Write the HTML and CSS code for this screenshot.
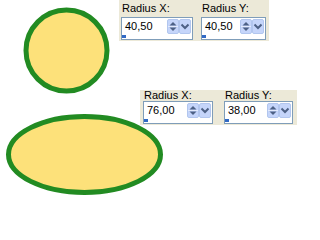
FILE: index.html
```html
<!DOCTYPE html>
<html>
<head>
<meta charset="utf-8">
<link rel="stylesheet" href="styles.css">
</head>
<body>
<div class="canvas">
  <svg class="drawing" width="302" height="208" viewBox="0 0 302 208">
    <circle cx="66.5" cy="50.5" r="40.5" fill="#FDE17A" stroke="#228B22" stroke-width="5"/>
    <ellipse cx="84.5" cy="154.5" rx="76" ry="38" fill="#FDE17A" stroke="#228B22" stroke-width="5"/>
  </svg>

  <div class="props props-circle">
    <div class="field w-x1">
      <div class="field-label">Radius X:</div>
      <div class="spin-edit">
        <div class="spin-row">
          <span class="spin-value">40,50</span>
          <svg class="spin-buttons" width="24" height="15" viewBox="0 0 24 15">
            <rect x="0.5" y="0.5" width="11" height="14" rx="1.5" fill="#C5D5FA" stroke="#B2C6EE"/>
            <line x1="1" y1="7.5" x2="11" y2="7.5" stroke="#E3EBFD"/>
            <polygon points="2.5,6.5 6,3 9.5,6.5" fill="#4D6185"/>
            <polygon points="2.5,8.5 9.5,8.5 6,12" fill="#4D6185"/>
            <rect x="12.5" y="0.5" width="11" height="14" rx="1.5" fill="#C5D5FA" stroke="#B2C6EE"/>
            <polyline points="14.5,5.5 18,9 21.5,5.5" fill="none" stroke="#4D6185" stroke-width="2"/>
          </svg>
        </div>
        <div class="spin-track"><span class="spin-mark"></span></div>
      </div>
    </div>
    <div class="field w-y1">
      <div class="field-label">Radius Y:</div>
      <div class="spin-edit">
        <div class="spin-row">
          <span class="spin-value">40,50</span>
          <svg class="spin-buttons" width="24" height="15" viewBox="0 0 24 15">
            <rect x="0.5" y="0.5" width="11" height="14" rx="1.5" fill="#C5D5FA" stroke="#B2C6EE"/>
            <line x1="1" y1="7.5" x2="11" y2="7.5" stroke="#E3EBFD"/>
            <polygon points="2.5,6.5 6,3 9.5,6.5" fill="#4D6185"/>
            <polygon points="2.5,8.5 9.5,8.5 6,12" fill="#4D6185"/>
            <rect x="12.5" y="0.5" width="11" height="14" rx="1.5" fill="#C5D5FA" stroke="#B2C6EE"/>
            <polyline points="14.5,5.5 18,9 21.5,5.5" fill="none" stroke="#4D6185" stroke-width="2"/>
          </svg>
        </div>
        <div class="spin-track"><span class="spin-mark"></span></div>
      </div>
    </div>
  </div>

  <div class="props props-ellipse">
    <div class="field w-x2">
      <div class="field-label">Radius X:</div>
      <div class="spin-edit">
        <div class="spin-row">
          <span class="spin-value">76,00</span>
          <svg class="spin-buttons" width="24" height="15" viewBox="0 0 24 15">
            <rect x="0.5" y="0.5" width="11" height="14" rx="1.5" fill="#C5D5FA" stroke="#B2C6EE"/>
            <line x1="1" y1="7.5" x2="11" y2="7.5" stroke="#E3EBFD"/>
            <polygon points="2.5,6.5 6,3 9.5,6.5" fill="#4D6185"/>
            <polygon points="2.5,8.5 9.5,8.5 6,12" fill="#4D6185"/>
            <rect x="12.5" y="0.5" width="11" height="14" rx="1.5" fill="#C5D5FA" stroke="#B2C6EE"/>
            <polyline points="14.5,5.5 18,9 21.5,5.5" fill="none" stroke="#4D6185" stroke-width="2"/>
          </svg>
        </div>
        <div class="spin-track"><span class="spin-mark"></span></div>
      </div>
    </div>
    <div class="field w-y2">
      <div class="field-label">Radius Y:</div>
      <div class="spin-edit">
        <div class="spin-row">
          <span class="spin-value">38,00</span>
          <svg class="spin-buttons" width="24" height="15" viewBox="0 0 24 15">
            <rect x="0.5" y="0.5" width="11" height="14" rx="1.5" fill="#C5D5FA" stroke="#B2C6EE"/>
            <line x1="1" y1="7.5" x2="11" y2="7.5" stroke="#E3EBFD"/>
            <polygon points="2.5,6.5 6,3 9.5,6.5" fill="#4D6185"/>
            <polygon points="2.5,8.5 9.5,8.5 6,12" fill="#4D6185"/>
            <rect x="12.5" y="0.5" width="11" height="14" rx="1.5" fill="#C5D5FA" stroke="#B2C6EE"/>
            <polyline points="14.5,5.5 18,9 21.5,5.5" fill="none" stroke="#4D6185" stroke-width="2"/>
          </svg>
        </div>
        <div class="spin-track"><span class="spin-mark"></span></div>
      </div>
    </div>
  </div>
</div>
</body>
</html>
```

FILE: styles.css
```css
html, body {
  margin: 0;
  padding: 0;
  background: #ffffff;
}

body {
  font-family: "Liberation Sans", Arial, sans-serif;
  font-size: 11px;
  color: #000000;
}

.canvas {
  position: relative;
  width: 302px;
  height: 208px;
  overflow: hidden;
}

.drawing {
  display: block;
}

.props {
  position: absolute;
  display: flex;
  align-items: flex-start;
  background: #ECE9D8;
  box-sizing: border-box;
}

.props-circle {
  left: 119px;
  top: 0;
  width: 150px;
  height: 41px;
  padding: 3px 0 0 2px;
  gap: 8px;
}

.props-ellipse {
  left: 140px;
  top: 90px;
  width: 157px;
  height: 35px;
  padding: 0 0 0 3px;
  gap: 11px;
}

.field {
  display: flex;
  flex-direction: column;
}

.w-x1 { width: 72px; }
.w-y1 { width: 65px; }
.w-x2 { width: 70px; }
.w-y2 { width: 69px; }

.field-label {
  line-height: 11px;
  height: 11px;
  padding-left: 1px;
  white-space: nowrap;
}

.props-circle .field-label {
  margin-bottom: 3px;
}

.spin-edit {
  box-sizing: border-box;
  height: 23px;
  border: 1px solid #7F9DB9;
  background: #ffffff;
  display: flex;
  flex-direction: column;
}

.spin-row {
  display: flex;
  align-items: center;
  height: 16px;
  padding-left: 3px;
}

.spin-value {
  flex: 1;
  line-height: 16px;
}

.spin-buttons {
  display: block;
  margin-right: 1px;
  flex: none;
}

.spin-track {
  flex: 1;
  display: flex;
  align-items: flex-end;
  padding-bottom: 1px;
}

.spin-mark {
  display: block;
  width: 4px;
  height: 3px;
  background: #316AC5;
}
```
